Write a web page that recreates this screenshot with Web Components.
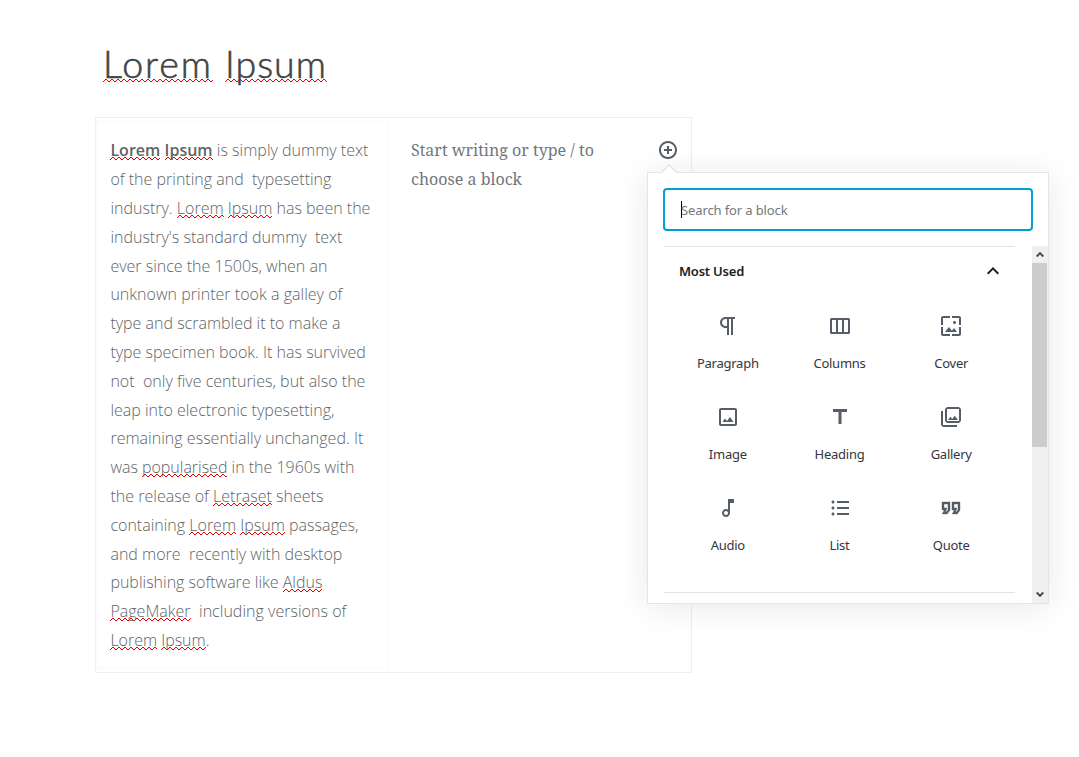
<!DOCTYPE html>
<html lang="en"><head><meta charset="utf-8"><title>Lorem Ipsum</title>
<style>
html,body{margin:0;background:#fff}
body{width:1079px;height:757px;overflow:hidden;font-family:"Open Sans",sans-serif}
</style></head><body>
<editor-page></editor-page>
<script>
const define=(name,html,init)=>customElements.define(name,class extends HTMLElement{
  constructor(){super();this.attachShadow({mode:'open'});
    const t=document.createElement('template');t.innerHTML=html;
    this.shadowRoot.append(t.content.cloneNode(true));}
  connectedCallback(){if(init)init(this,this.shadowRoot)}
});
const wave="data:image/svg+xml,"+encodeURIComponent('<svg xmlns="http://www.w3.org/2000/svg" width="6" height="3" shape-rendering="crispEdges"><path d="M0 2h1v1H0zM1 1h1v1H1zM2 0h2v1H2zM4 1h1v1H4zM5 2h1v1H5z" fill="#f00000"/></svg>');
define('spell-mark',`<style>
:host{display:inline-block;line-height:inherit;vertical-align:baseline;background:url("${wave}") 0 var(--wave-y,20px) repeat-x}
</style><slot></slot>`);
define('post-title',`<style>
:host{display:block;--wave-y:38px}
h1{margin:0;font:300 37.5px/46px Lato,sans-serif;color:#444;-webkit-text-stroke:.6px #444;white-space:nowrap;display:flex;gap:12px}
</style><h1><slot></slot></h1>`);
define('text-line',`<style>
:host{display:block;height:28.8px;white-space:pre}
</style><span><slot></slot></span>`,(el)=>{
  const s=el.getAttribute('fit');if(!s)return;
  const span=el.shadowRoot.querySelector('span');
  const w=span.getBoundingClientRect().width,n=el.textContent.length;
  span.style.letterSpacing=((+s-w)/n)+'px';
});
define('text-block',`<style>
:host{display:block;font:300 16px/28.8px "Open Sans",sans-serif;color:#606466;--wave-y:21px}
</style><slot></slot>`);
define('block-prompt',`<style>
:host{display:block;font:400 16px/28.8px "Noto Serif","DejaVu Serif Condensed","DejaVu Serif",serif;color:#72777c}
</style><slot></slot>`);
const icons={
add:'<path d="M10 1c-5 0-9 4-9 9s4 9 9 9 9-4 9-9-4-9-9-9zm0 16c-3.9 0-7-3.1-7-7s3.1-7 7-7 7 3.1 7 7-3.1 7-7 7zm1-11H9v3H6v2h3v3h2v-3h3V9h-3V6z"/>',
up:'<path d="M12 8l-6 6 1.41 1.41L12 10.83l4.59 4.58L18 14z"/>',
paragraph:'<path d="M11 5v7H9.5C7.6 12 6 10.4 6 8.5S7.600 5 9.500 5H11m8-2H9.500C6.500 3 4 5.500 4 8.500S6.500 14 9.500 14H11v7h2V5h2v16h2V5h2V3z"/>',
columns:'<path d="M21 4H3L2 5v14l1 1h18l1-1V5l-1-1zM8 18H4V6h4v12zm6 0h-4V6h4v12zm6 0h-4V6h4v12z"/>',
cover:'<path d="M4 4h7V2H4c-1.100 0-2 .9-2 2v7h2V4zm6 9l-4 5h12l-3-4-2.030 2.710L10 13zm7-4.500c0-.83-.67-1.500-1.500-1.500S14 7.670 14 8.500s.67 1.500 1.500 1.500S17 9.330 17 8.500zM20 2h-7v2h7v7h2V4c0-1.100-.9-2-2-2zm0 18h-7v2h7c1.100 0 2-.9 2-2v-7h-2v7zM4 13H2v7c0 1.100.9 2 2 2h7v-2H4v-7z"/>',
image:'<path d="M19 3H5c-1.100 0-2 .9-2 2v14c0 1.100.9 2 2 2h14c1.100 0 2-.9 2-2V5c0-1.100-.9-2-2-2m0 2v14H5V5h14m-5 7l-3 4-2-2.500L6.500 17h11z"/>',
heading:'<path d="M5 4v3h5.500v12h3V7H19V4z"/>',
gallery:'<path d="M20 4v12H8V4h12m0-2H8L6 4v12l2 2h12l2-2V4l-2-2zm-8.500 9.670l1.690 2.260 2.480-3.100L19 15H9zM2 6v14l2 2h14v-2H4V6H2z"/>',
audio:'<path d="M12 3l.010 10.550c-.59-.34-1.270-.55-2-.55C7.790 13 6 14.790 6 17s1.790 4 4.010 4S14 19.210 14 17V7h4V3h-6zm-1.990 16c-1.100 0-2-.9-2-2s.9-2 2-2 2 .9 2 2-.9 2-2 2z"/>',
list:'<path d="M9 19h12v-2H9v2zm0-6h12v-2H9v2zm0-8v2h12V5H9zm-4-.500c-.828 0-1.500.672-1.500 1.500S4.172 7.500 5 7.500 6.500 6.828 6.500 6 5.828 4.500 5 4.500zm0 6c-.828 0-1.500.672-1.500 1.500s.672 1.500 1.500 1.500 1.500-.672 1.500-1.500-.672-1.500-1.500-1.500zm0 6c-.828 0-1.500.672-1.500 1.500s.672 1.500 1.500 1.500 1.500-.672 1.500-1.500-.672-1.500-1.500-1.500z"/>',
quote:'<path fill-rule="evenodd" stroke="currentColor" stroke-width=".4" d="M21 6v8.250L18.250 18h-5l2-4H13V6h8zm-6 2v4h3l-1.500 4h.700l1.800-2.350V8h-4zM11 6v8.250L8.250 18h-5l2-4H3V6h8zM5 8v4h3l-1.500 4h.700L9 13.650V8H5z"/>'
};
define('ui-icon',`<style>:host{display:block;width:24px;height:24px;flex:none}svg{display:block;width:100%;height:100%;fill:currentColor}</style><svg></svg>`,(el,r)=>{
  const s=r.querySelector('svg');s.setAttribute('viewBox',el.getAttribute('box')||'0 0 24 24');s.innerHTML=icons[el.getAttribute('name')]||'';
});
define('block-item',`<style>
:host{display:flex;flex-direction:column;align-items:center;height:91px;box-sizing:border-box;padding-top:18px;color:#555d66}
span{font:13px/18px "Noto Sans",sans-serif;letter-spacing:-.25px;color:#32373c;margin-top:16px}
</style><span><slot></slot></span>`,(el,r)=>{
  const i=document.createElement('ui-icon');i.setAttribute('name',el.getAttribute('icon'));
  r.querySelector('span').before(i);
});
define('search-field',`<style>
:host{display:flex;align-items:center;box-sizing:border-box;height:43px;border:2px solid #00a0d2;border-radius:4px;padding:0 16px;font:13px/18px "Noto Sans",sans-serif;letter-spacing:-.12px;color:#72777c;background:#fff}
i{width:1px;height:17px;background:#000;margin-right:-1px}
</style><i></i><slot></slot>`);
define('scroll-rail',`<style>
:host{display:flex;flex-direction:column;width:16px;background:#f0f0f0;height:357px;flex:none}
div{height:17px;width:15px;display:flex;align-items:center;justify-content:center}
b{display:block;width:15px;height:184px;background:#cdcdcd}
span{flex:1}svg{display:block;width:8px;height:7px;fill:none;stroke:#505050;stroke-width:2}
</style><div><svg viewBox="0 0 8 7"><path d="M.7 5.500L4 2.200 7.300 5.500"/></svg></div><b></b><span></span><div><svg viewBox="0 0 8 7"><path d="M.7 1.500L4 4.800 7.300 1.500"/></svg></div>`);
define('block-inserter',`<style>
:host{display:block;position:absolute;left:647px;top:172px;width:402px;height:432px;box-sizing:border-box;border:1px solid #e2e4e7;background:#fff;box-shadow:0 3px 30px rgba(25,30,35,.1)}
.tip{position:absolute;left:12px;top:-9px;width:18px;height:9px;display:block}
search-field{margin:15px 15px 15px}
.body{display:flex;justify-content:space-between;height:357px}
.list{width:351px;margin-left:16px;height:357px;overflow:hidden}
header{display:flex;justify-content:space-between;align-items:center;border-top:1px solid #e2e4e7;box-sizing:border-box;height:49px;padding:0 10px 0 15px;font:600 13px/18px "Noto Sans",sans-serif;letter-spacing:-.22px;color:#191e23}
.grid{display:grid;grid-template-columns:repeat(3,111.700px);grid-auto-rows:91px;align-content:start;padding:1px 8px 0;box-sizing:border-box;height:298px;border-bottom:1px solid #e2e4e7;justify-content:center}
</style><svg class="tip" viewBox="0 0 18 9"><path d="M0 9L1.500 8.500 9 1l7.500 7.500L18 9z" fill="#fff"/><path d="M1.500 8.500L9 1l7.500 7.500" fill="none" stroke="#e2e4e7" stroke-width="1.400"/></svg>
<search-field>Search for a block</search-field>
<div class="body"><div class="list"><header>Most Used<ui-icon name="up"></ui-icon></header>
<div class="grid"><block-item icon="paragraph">Paragraph</block-item><block-item icon="columns">Columns</block-item><block-item icon="cover">Cover</block-item><block-item icon="image">Image</block-item><block-item icon="heading">Heading</block-item><block-item icon="gallery">Gallery</block-item><block-item icon="audio">Audio</block-item><block-item icon="list">List</block-item><block-item icon="quote">Quote</block-item></div></div><scroll-rail></scroll-rail></div>`);
define('column-set',`<style>
:host{display:flex;box-sizing:border-box;width:597px;height:556px;border:1px solid #edeff0;padding:3px 0}
.a{box-sizing:border-box;width:293px;border:1px solid #f8f9f9;border-left-color:#fafafa;padding:14.420px 0 0 13.400px}
.b{flex:1;display:flex;padding:15px 13px 0 22px;justify-content:space-between}
ui-icon{width:20px;height:20px;color:#555d66;margin-top:4px;margin-right:-.4px}
</style><div class="a"><slot name="first"></slot></div><div class="b"><slot name="second"></slot><ui-icon name="add" box="0 0 20 20"></ui-icon></div>`);
const m=s=>s.replace(/\[(.*?)\]/g,'<spell-mark>$1</spell-mark>');
const lines=[['<b style="font-weight:600">[Lorem] [Ipsum]</b> is simply dummy text',258],['of the printing and  typesetting',221],['industry. [Lorem] [Ipsum] has been the',260],["industry's standard dummy  text",232],['ever since the 1500s, when an',217],['unknown printer took a galley of',232],['type and scrambled it to make a',230],['type specimen book. It has survived',255.5],['not  only five centuries, but also the',255],['leap into electronic typesetting,',224],['remaining essentially unchanged. It',253],['was [popularised] in the 1960s with',244],['the release of [Letraset] sheets',213],['containing [Lorem] [Ipsum] passages,',248],['and more  recently with desktop',232],['publishing software like [Aldus]',212],['[PageMaker]  including versions of',236],['[Lorem] [Ipsum].',99]];
define('editor-page',`<style>
:host{display:block;box-sizing:border-box;width:1079px;height:757px;padding:41px 0 0 95px;position:relative;background:#fff}
post-title{margin-left:8px;height:76px}
</style><post-title><spell-mark style="letter-spacing:2px">Lorem</spell-mark> <spell-mark style="letter-spacing:1px">Ipsum</spell-mark></post-title>
<column-set><text-block slot="first">${lines.map(([t,w])=>`<text-line fit="${w}">${m(t)}</text-line>`).join('')}</text-block>
<block-prompt slot="second"><text-line fit="183">Start writing or type / to</text-line><text-line fit="111">choose a block</text-line></block-prompt></column-set>
<block-inserter></block-inserter>`);
</script></body></html>
